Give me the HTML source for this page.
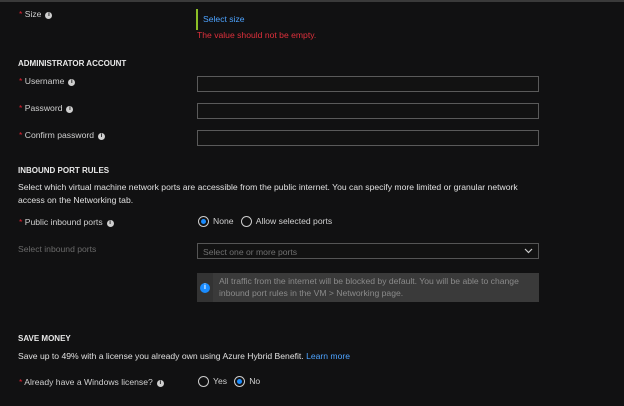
<!DOCTYPE html>
<html><head><style>
*{margin:0;padding:0;box-sizing:border-box}
body{width:624px;height:406px;background:#111112;font-family:"Liberation Sans",sans-serif;font-size:8.6px;color:#d0d0d0;position:relative;overflow:hidden;border-top:2px solid #3a3a3a}
.a{position:absolute;white-space:nowrap}
.s{color:#e02030}
.h{font-weight:bold;color:#e8e8e8;font-size:8px}
.i{display:inline-block;width:7px;height:7px;border-radius:50%;background:#cfcfcf;color:#111;font-size:6px;font-weight:bold;text-align:center;line-height:7px;vertical-align:1px;margin-left:4px}
.in{position:absolute;left:197px;width:342px;height:16px;border:1px solid #5a5a5a;background:#121212}
.r{display:inline-block;width:11px;height:11px;border-radius:50%;border:1px solid #ccc;vertical-align:-3px;margin-right:4px;position:relative}
.r.on::after{content:"";position:absolute;left:2px;top:2px;width:5px;height:5px;border-radius:50%;background:#1a8cff}
</style></head><body>
<div class="a" style="left:19px;top:7px"><span class="s">*</span> Size<span class="i">i</span></div>
<div class="a" style="left:196px;top:7px;width:2px;height:21px;background:#8cbf26"></div>
<div class="a" style="left:203px;top:12px;color:#4da3ff">Select size</div>
<div class="a" style="left:197px;top:28px;color:#e0303c">The value should not be empty.</div>
<div class="a h" style="left:18px;top:57px">ADMINISTRATOR ACCOUNT</div>
<div class="a" style="left:19px;top:74px"><span class="s">*</span> Username<span class="i">i</span></div>
<div class="in" style="top:74px"></div>
<div class="a" style="left:19px;top:101px"><span class="s">*</span> Password<span class="i">i</span></div>
<div class="in" style="top:101px"></div>
<div class="a" style="left:19px;top:128px"><span class="s">*</span> Confirm password<span class="i">i</span></div>
<div class="in" style="top:128px"></div>
<div class="a h" style="left:18px;top:164px">INBOUND PORT RULES</div>
<div class="a" style="left:18px;top:179px;line-height:13px;color:#e0e0e0">Select which virtual machine network ports are accessible from the public internet. You can specify more limited or granular network<br>access on the Networking tab.</div>
<div class="a" style="left:19px;top:215px"><span class="s">*</span> Public inbound ports<span class="i">i</span></div>
<div class="a" style="left:198px;top:214px"><span class="r on"></span>None &nbsp; <span class="r"></span>Allow selected ports</div>
<div class="a" style="left:18px;top:242px;color:#6a6a6a">Select inbound ports</div>
<div class="in" style="top:241px;border-color:#555;color:#707070;padding:3px 5px">Select one or more ports<svg style="position:absolute;right:5px;top:4px" width="9" height="6" viewBox="0 0 9 6"><path d="M1 1l3.5 3.5L8 1" stroke="#ccc" fill="none" stroke-width="1.2"/></svg></div>
<div class="a" style="left:197px;top:271px;width:342px;height:29px;background:#3a3a3a"></div>
<div class="a" style="left:197px;top:271px;width:16px;height:29px;background:#333"></div>
<div class="a" style="left:200px;top:281px;width:10px;height:10px;border-radius:50%;background:#1a8cff;color:#fff;font-size:7px;font-weight:bold;text-align:center;line-height:10px">i</div>
<div class="a" style="left:219px;top:273px;line-height:12px;color:#8a8a8a">All traffic from the internet will be blocked by default. You will be able to change<br>inbound port rules in the VM &gt; Networking page.</div>
<div class="a h" style="left:18px;top:332px">SAVE MONEY</div>
<div class="a" style="left:18px;top:349px;color:#e0e0e0">Save up to 49% with a license you already own using Azure Hybrid Benefit. <span style="color:#4da3ff">Learn more</span></div>
<div class="a" style="left:19px;top:375px"><span class="s">*</span> Already have a Windows license?<span class="i">i</span></div>
<div class="a" style="left:198px;top:374px"><span class="r"></span>Yes &nbsp; <span class="r on"></span>No</div>
</body></html>
